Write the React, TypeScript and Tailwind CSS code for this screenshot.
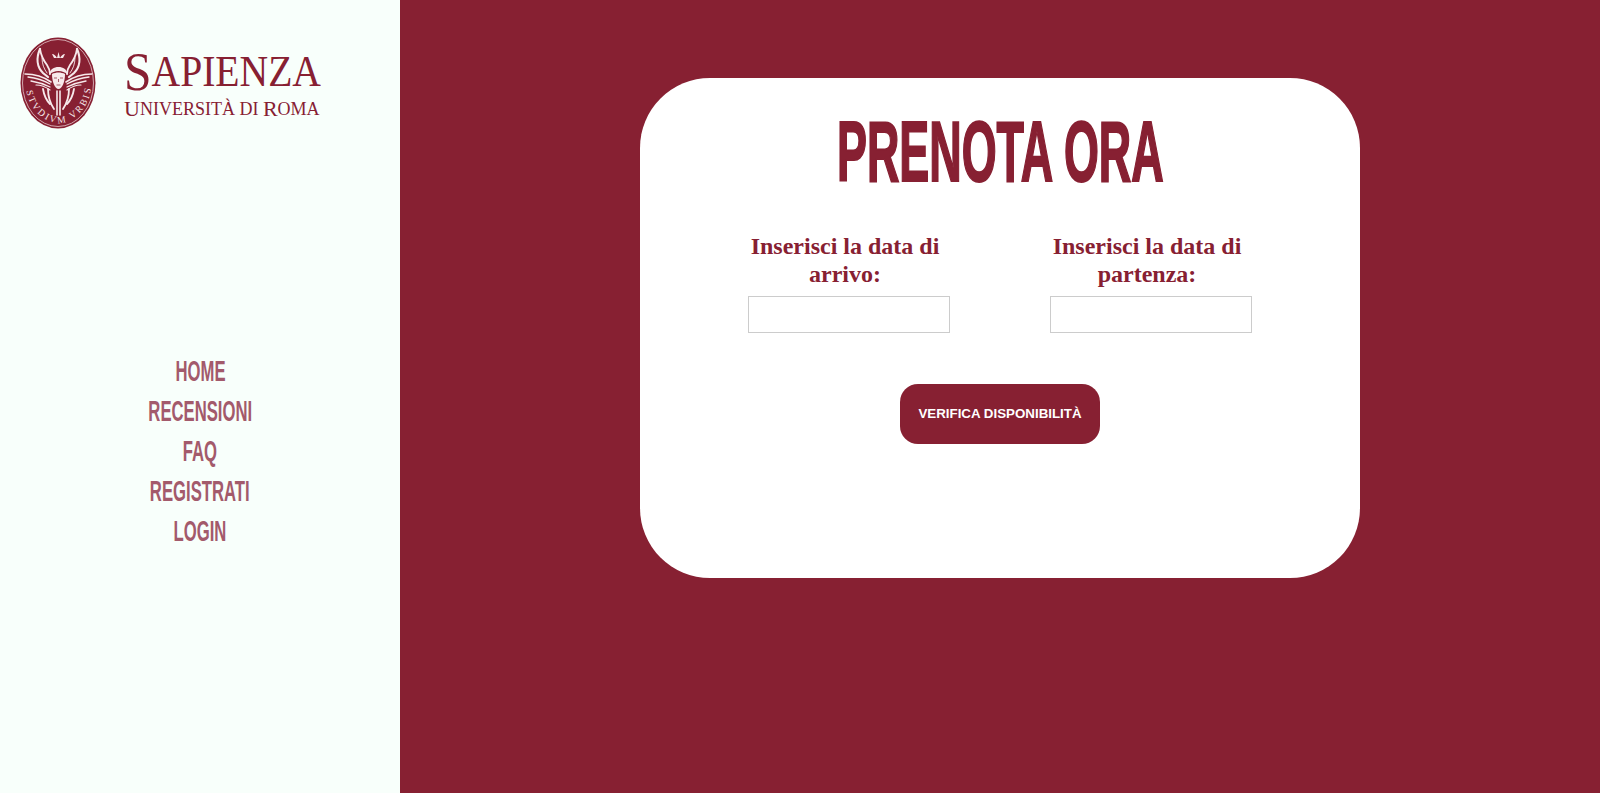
const navItems = ["HOME", "RECENSIONI", "FAQ", "REGISTRATI", "LOGIN"];

function Seal() {
  return (
    <svg viewBox="0 0 76 92" className="w-[76px] h-[92px] shrink-0">
      <ellipse cx="38" cy="46" rx="37.5" ry="45.500" fill="#872032" />
      <ellipse cx="38" cy="46" rx="35.500" ry="43.500" fill="none" stroke="#f3dfe2" strokeWidth="0.7" />
      {/* crown */}
      <path d="M38.500 15l1.500 6h-3zM32 17c2 0 4 2 5 4h-3zM45 17c-2 0-4 2-5 4h3z" fill="#f7e9eb" />
      {/* upper wings */}
      <g fill="none" stroke="#f7e9eb" strokeLinecap="round">
        <path d="M20 12c-4 9-3 18 3 24l5 4" strokeWidth="2.200" />
        <path d="M20 12c1 7 4 12 7 16 2 3 3 6 3 9" strokeWidth="1.800" />
        <path d="M22 21c0 6 2 11 5 15" strokeWidth="0.900" />
        <path d="M57 12c4 9 3 18-3 24l-5 4" strokeWidth="2.200" />
        <path d="M57 12c-1 7-4 12-7 16-2 3-3 6-3 9" strokeWidth="1.800" />
        <path d="M55 21c0 6-2 11-5 15" strokeWidth="0.900" />
      </g>
      {/* side wings */}
      <g fill="none" stroke="#f7e9eb" strokeLinecap="round">
        <path d="M5 37c9 0 19 3 26 8" strokeWidth="1.600" />
        <path d="M8 40c8 1 15 3 22 7" strokeWidth="1.300" />
        <path d="M11 44c6 1 13 3 19 6" strokeWidth="1.300" />
        <path d="M16 48c5 0 10 2 14 5" strokeWidth="1.200" />
        <path d="M72 37c-9 0-19 3-26 8" strokeWidth="1.600" />
        <path d="M69 40c-8 1-15 3-22 7" strokeWidth="1.300" />
        <path d="M66 44c-6 1-13 3-19 6" strokeWidth="1.300" />
        <path d="M61 48c-5 0-10 2-14 5" strokeWidth="1.200" />
      </g>
      {/* head */}
      <path d="M29 38c1-6 5-8 9.500-8s8.500 2 9.500 8c-3-3-6-4-9.500-4s-6.500 1-9.500 4z" fill="#f7e9eb" />
      <path d="M32 37c4-2 9-2 13 0 0 8-3 15-6.500 15S32 45 32 37z" fill="#f7e9eb" />
      <path d="M34 41h3M40 41h3M38.500 42v3M36.500 48h4" stroke="#872032" strokeWidth="0.700" fill="none" />
      {/* lower strands */}
      <g fill="none" stroke="#f7e9eb" strokeLinecap="round">
        <path d="M23 52c1 6 3 11 7 15" strokeWidth="1.800" />
        <path d="M28 52c0 7 2 14 6 20" strokeWidth="1.800" />
        <path d="M54 52c-1 6-3 11-7 15" strokeWidth="1.800" />
        <path d="M49 52c0 7-2 14-6 20" strokeWidth="1.800" />
        <path d="M37 54v24M40 54v24" strokeWidth="1.600" />
      </g>
      {/* motto */}
      <path id="motto" d="M6 52C9 74 26 86 38.500 86S68 74 71 52" fill="none" />
      <text fontFamily="'Liberation Serif', serif" fontSize="9.500" fill="#f7e9eb" textLength="100">
        <textPath href="#motto" startOffset="2">STVDIVM VRBIS</textPath>
      </text>
    </svg>
  );
}

function Logo() {
  return (
    <div className="flex items-center gap-[28px] text-[#872032] font-['Liberation_Serif',serif]">
      <Seal />
      <div className="flex flex-col">
        <div className="h-[46px] flex items-end whitespace-nowrap origin-left scale-x-[0.9]">
          <span className="text-[55px] leading-[46px]">S</span>
          <span className="text-[44px] leading-[46px]">APIENZA</span>
        </div>
        <div className="h-[18px] mt-[5px] flex items-end whitespace-nowrap">
          <span className="text-[22px] leading-[18px]">U</span>
          <span className="text-[18px] leading-[18px]">NIVERSITÀ DI&nbsp;</span>
          <span className="text-[22px] leading-[18px]">R</span>
          <span className="text-[18px] leading-[18px]">OMA</span>
        </div>
      </div>
    </div>
  );
}

function DateField({ label }: { label: string }) {
  return (
    <div className="w-[202px] flex flex-col items-center">
      <label className="pr-[8px] text-center text-[24px] leading-[28px] font-bold text-[#872032] font-['Liberation_Serif',serif]">
        {label}
      </label>
      <input type="text" className="mt-[8px] w-[202px] h-[37px] border border-[#cccccc] bg-white" />
    </div>
  );
}

export default function App() {
  return (
    <div className="flex h-[793px] w-full overflow-hidden bg-[#872032]">
      <aside className="w-[400px] shrink-0 bg-[#f8fffb] flex flex-col">
        <div className="pl-[20px] pt-[37px]">
          <Logo />
        </div>
        <nav className="mt-[222px] flex flex-col items-center font-['Liberation_Sans',sans-serif] text-[29px] leading-[40px] font-bold text-[#a35a6b]">
          {navItems.map((item) => (
            <a key={item} href="#" className="block whitespace-nowrap scale-x-[0.575]">
              {item}
            </a>
          ))}
        </nav>
      </aside>

      <main className="flex-1 flex justify-center pt-[78px]">
        <div className="w-[720px] h-[500px] bg-white rounded-[70px] flex flex-col items-center">
          <h1 className="mt-[31px] h-[86px] text-[85px] leading-[86px] font-bold text-[#872032] whitespace-nowrap font-['Liberation_Sans',sans-serif] scale-x-[0.528] [-webkit-text-stroke:2px_#872032]">
            PRENOTA ORA
          </h1>
          <div className="mt-[37px] flex gap-[100px]">
            <DateField label="Inserisci la data di arrivo:" />
            <DateField label="Inserisci la data di partenza:" />
          </div>
          <button className="mt-[51px] w-[200px] h-[60px] rounded-[18px] bg-[#872032] text-white text-[13.33px] font-bold font-['Liberation_Sans',sans-serif]">
            VERIFICA DISPONIBILITÀ
          </button>
        </div>
      </main>
    </div>
  );
}
